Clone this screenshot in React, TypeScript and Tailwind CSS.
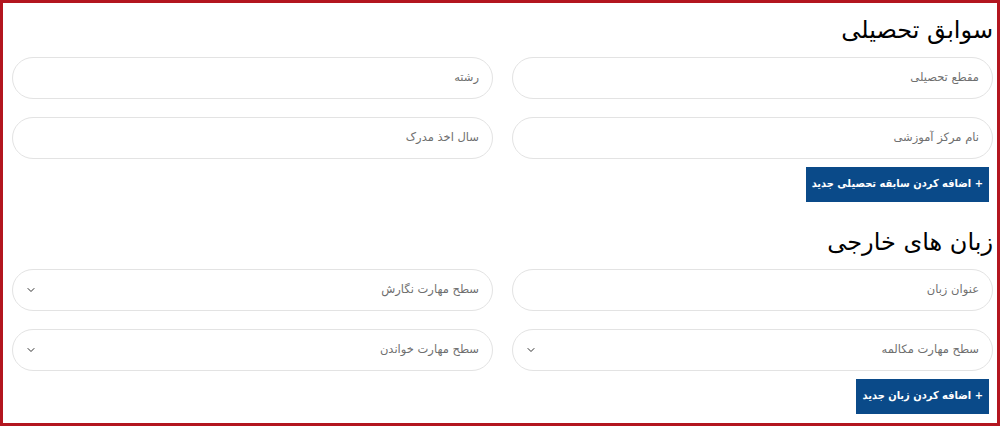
import { ChevronDown } from "lucide-react";

const font = { fontFamily: '"DejaVu Sans", sans-serif' };
const condensed = { fontFamily: '"DejaVu Sans Condensed", "DejaVu Sans", sans-serif' };

function Field({ label, select }: { label: string; select?: boolean }) {
  return (
    <div className="h-[42px] rounded-full border border-[#e3e3e3] bg-white flex items-center justify-between pr-[13px] pl-[12px]">
      <span className="text-[11.5px] text-[#6f6f6f]">{label}</span>
      {select && <ChevronDown className="w-[12px] h-[12px] text-[#333]" strokeWidth={2} />}
    </div>
  );
}

function AddButton({ children }: { children: string }) {
  return (
    <div className="flex mt-[8px] pr-[4px]">
      <button
        style={condensed}
        className="h-[35px] px-[6px] bg-[#0a4a89] text-white text-[11px] font-bold tracking-[-0.2px]"
      >
        {children}
      </button>
    </div>
  );
}

export default function App() {
  return (
    <div
      dir="rtl"
      style={font}
      className="w-[1000px] h-[426px] box-border border-[3px] border-[#b3161f] bg-white pr-[4px] pl-[9px]"
    >
      <h2 className="h-[54px] flex items-center text-[24px] text-black">سوابق تحصیلی</h2>
      <div className="grid grid-cols-2 gap-x-[19px] gap-y-[18px]">
        <Field label="مقطع تحصیلی" />
        <Field label="رشته" />
        <Field label="نام مرکز آموزشی" />
        <Field label="سال اخذ مدرک" />
      </div>
      <AddButton>+ اضافه کردن سابقه تحصیلی جدید</AddButton>

      <h2 className="mt-[13px] h-[54px] flex items-center text-[24px] text-black">زبان های خارجی</h2>
      <div className="grid grid-cols-2 gap-x-[19px] gap-y-[18px]">
        <Field label="عنوان زبان" />
        <Field label="سطح مهارت نگارش" select />
        <Field label="سطح مهارت مکالمه" select />
        <Field label="سطح مهارت خواندن" select />
      </div>
      <AddButton>+ اضافه کردن زبان جدید</AddButton>
    </div>
  );
}
